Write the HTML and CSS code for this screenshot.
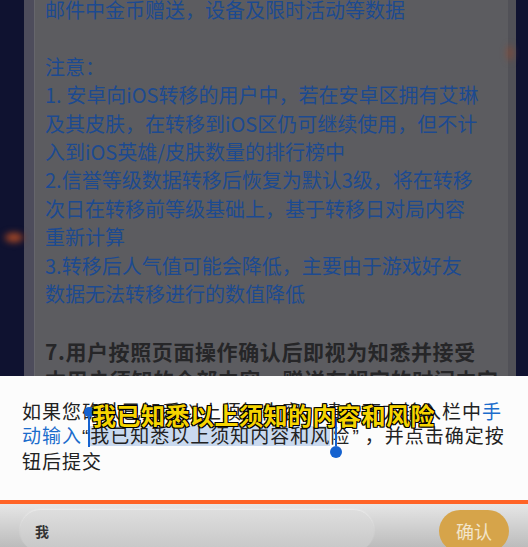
FILE: index.html
```html
<!DOCTYPE html>
<html lang="zh-CN">
<head>
<meta charset="utf-8">
<title>用户须知</title>
<link rel="stylesheet" href="styles.css">
</head>
<body>
<div class="screen">
  <div class="backdrop">
    <div class="glow glow-left"></div>
    <div class="glow glow-right"></div>
    <div class="panel">
      <div class="doc">
        <p class="blue">邮件中金币赠送，设备及限时活动等数据<br>&nbsp;<br>注意：<br>1. 安卓向iOS转移的用户中，若在安卓区拥有艾琳<br>及其皮肤，在转移到iOS区仍可继续使用，但不计<br>入到iOS英雄/皮肤数量的排行榜中<br>2.信誉等级数据转移后恢复为默认3级，将在转移<br>次日在转移前等级基础上，基于转移日对局内容<br>重新计算<br>3.转移后人气值可能会降低，主要由于游戏好友<br>数据无法转移进行的数值降低<br>&nbsp;</p>
        <p class="bold">7.用户按照页面操作确认后即视为知悉并接受<br>本用户须知的全部内容，赠送在规定的时间内完</p>
      </div>
    </div>
  </div>
  <div class="sheet">
    <p class="prompt">如果您确认已知悉以上须知内容，请在下方输入栏中<span class="link">手<br>动输入</span><span class="q q-open">“</span><span class="sel">我已知悉以上须知内容和风</span>险<span class="q q-close">”</span>，并点击确定按<br>钮后提交</p>
    <div class="handle handle-start"><span class="knob"></span><span class="stem"></span></div>
    <div class="handle handle-end"><span class="stem"></span><span class="knob"></span></div>
    <div class="caption">我已知悉以上须知的内容和风险</div>
  </div>
  <div class="accent"></div>
  <div class="bar">
    <div class="input">我</div>
    <div class="confirm">确认</div>
  </div>
</div>
</body>
</html>
```

FILE: styles.css
```css
html, body {
  margin: 0;
  padding: 0;
}
body {
  width: 528px;
  height: 547px;
  overflow: hidden;
  background: #0f1230;
  font-family: "Noto Sans CJK SC", "Noto Sans", sans-serif;
}
.screen {
  width: 528px;
  height: 547px;
  display: flex;
  flex-direction: column;
}
.backdrop {
  position: relative;
  height: 376px;
  flex: none;
  display: flex;
  overflow: hidden;
  background: #0f1230;
}
.glow {
  position: absolute;
  border-radius: 50%;
  filter: blur(3px);
}
.glow-left {
  left: 4px;
  top: 232px;
  width: 20px;
  height: 11px;
  background: radial-gradient(ellipse at center, #c2592c 0%, #7a3424 55%, rgba(40,20,40,0) 100%);
}
.glow-right {
  left: 506px;
  top: 44px;
  width: 8px;
  height: 18px;
  background: radial-gradient(ellipse at center, #8a4a34 0%, rgba(60,30,40,0) 100%);
}
.panel {
  margin-left: 24px;
  width: 463px;
  border-left: 10px solid #4d4c5b;
  border-right: 8px solid #515157;
  background: #5c5c60;
  box-shadow: inset 1px 0 0 #66666c;
  padding-left: 11px;
  overflow: hidden;
}
.doc {
  margin-top: -4px;
}
.doc p {
  margin: 0;
  font-size: 20px;
  line-height: 28.4px;
  white-space: nowrap;
}
.blue {
  color: #1c4a90;
}
.bold {
  color: #262628;
  font-weight: 700;
  font-size: 21px !important;
  letter-spacing: 0.6px;
}
.sheet {
  position: relative;
  height: 124px;
  flex: none;
  background: #fcfcfc;
  box-sizing: border-box;
  padding: 23px 0 0 22px;
}
.prompt {
  margin: 0;
  font-size: 19px;
  letter-spacing: 1px;
  line-height: 24px;
  color: #222222;
  white-space: nowrap;
}
.link {
  color: #1b6ccc;
}
.q {
  font-family: "Liberation Sans", sans-serif;
  letter-spacing: 0;
}
.q-open {
  padding-right: 2px;
}
.q-close {
  padding-left: 2px;
  padding-right: 6px;
}
.sel {
  background: linear-gradient(to bottom, transparent 0, transparent 5px, #c9d9ef 5px, #c9d9ef 25px, transparent 25px);
}
.handle {
  position: absolute;
  display: flex;
  flex-direction: column;
  align-items: center;
  width: 14px;
}
.handle-start {
  left: 82px;
  top: 31px;
}
.handle-end {
  left: 329px;
  top: 42px;
}
.knob {
  display: block;
  width: 12px;
  height: 12px;
  border-radius: 50%;
  background: #1562cf;
}
.handle-start .knob {
  width: 10px;
  height: 10px;
}
.stem {
  display: block;
  width: 2px;
  height: 30px;
  background: #1562cf;
}
.handle-end .stem {
  height: 28px;
}
.caption {
  position: absolute;
  left: 92px;
  top: 24px;
  font-size: 24px;
  line-height: 30px;
  font-weight: 700;
  letter-spacing: 0.5px;
  color: #f6d400;
  -webkit-text-stroke: 1.4px #111;
  paint-order: stroke fill;
  text-shadow: 1px 1px 0 #000, -1px 1px 0 #000, 1px -1px 0 #000, -1px -1px 0 #000;
  white-space: nowrap;
}
.accent {
  height: 4px;
  flex: none;
  background: #ff6326;
}
.bar {
  flex: 1;
  display: flex;
  align-items: flex-start;
  justify-content: space-between;
  padding: 6px 19px 0 20px;
  background: linear-gradient(to bottom, #e6e6e6 0%, #bcbcbc 100%);
  overflow: hidden;
}
.input {
  width: 354px;
  height: 42px;
  border-radius: 21px;
  background: linear-gradient(to bottom, #dedede 0%, #c6c6c6 100%);
  box-shadow: 0 -1px 2px rgba(255,255,255,0.4);
  padding-left: 15px;
  box-sizing: border-box;
  font-size: 14px;
  font-weight: 700;
  line-height: 42px;
  color: #333;
}
.confirm {
  width: 70px;
  height: 42px;
  border-radius: 21px;
  background: #d6a44a;
  color: #f2e5ca;
  font-size: 18px;
  line-height: 42px;
  text-align: center;
}
```
